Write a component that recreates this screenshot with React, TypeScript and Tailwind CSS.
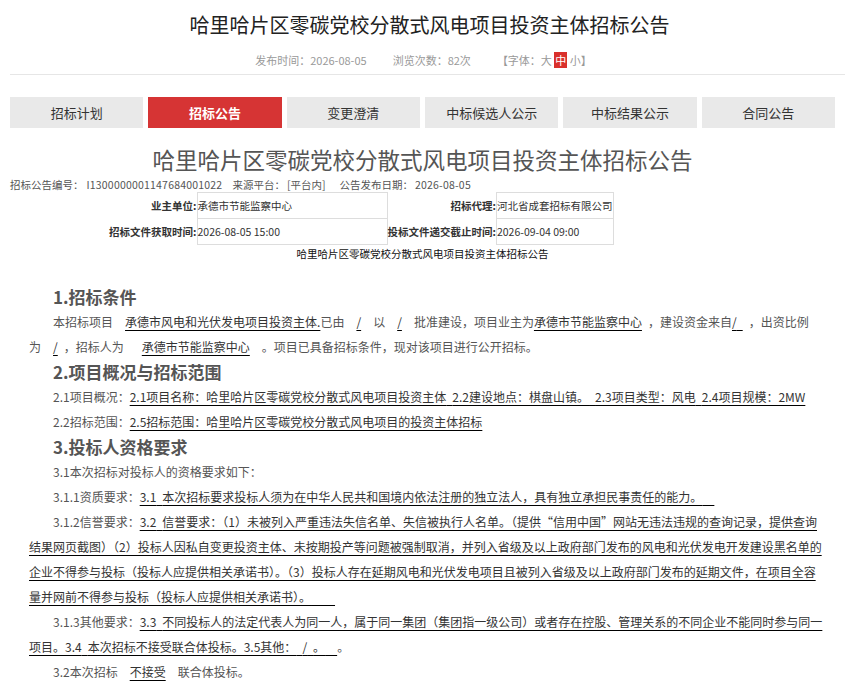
import type { ReactNode } from 'react';

const tabs = ['招标计划', '招标公告', '变更澄清', '中标候选人公示', '中标结果公示', '合同公告'];

// half-width blank, same advance as a 宋体 space
const sp = (n: number) => '\u2002'.repeat(n);

function U({ children }: { children: ReactNode }) {
  return (
    <span className="text-[#333] underline decoration-black decoration-1 underline-offset-[3px]">
      {children}
    </span>
  );
}

function Heading({ children }: { children: ReactNode }) {
  return <h3 className="pl-[24px] text-[17px] font-bold leading-[25px] text-[#555]">{children}</h3>;
}

function Line({ children }: { children: ReactNode }) {
  return <p className="indent-[24px] leading-[25px]">{children}</p>;
}

export default function App() {
  return (
    <div className="w-[859px] bg-white pb-[8px] font-['Noto_Sans_CJK_SC','Liberation_Sans',sans-serif] text-[#333]">
      <h1 className="pt-[11px] text-center text-[20px] leading-[28px] text-[#222]">
        哈里哈片区零碳党校分散式风电项目投资主体招标公告
      </h1>

      <div className="mt-[11px] flex justify-center gap-[26px] pr-[12px] text-[11px] leading-[20px] text-[#999]">
        <span>发布时间：2026-08-05</span>
        <span>浏览次数：82次</span>
        <span>
          【字体：大 <span className="bg-[#d9302c] px-px text-white">中</span> 小】
        </span>
      </div>

      <div className="ml-[10px] mr-[14px] mt-[4px] h-px bg-[#e6e6e6]" />

      <nav className="mx-[10px] mt-[22px] flex w-[825px] gap-[5px]">
        {tabs.map((t) => (
          <div
            key={t}
            className={`flex h-[31px] flex-1 items-center justify-center text-[13px] ${
              t === '招标公告' ? 'bg-[#d63434] font-bold text-white' : 'bg-[#e9e9e9] text-[#333]'
            }`}
          >
            {t}
          </div>
        ))}
      </nav>

      <div className="w-[845px]">
        <h2 className="mt-[16px] text-center text-[22.5px] leading-[30px] text-[#555]">
          哈里哈片区零碳党校分散式风电项目投资主体招标公告
        </h2>

        <div className="mt-[4px] flex pl-[10px] text-[10.5px] leading-[14px] text-[#555]">
          <span>招标公告编号：</span>
          <span className="ml-[3px] tracking-[0.2px]">I1300000001147684001022</span>
          <span className="ml-[10px]">来源平台：</span>
          <span className="ml-[2px]">[平台内]</span>
          <span className="ml-[14px]">公告发布日期：</span>
          <span className="ml-[2px] tracking-[0.2px]">2026-08-05</span>
        </div>

        <table className="ml-[60px] border-collapse whitespace-nowrap text-[10.5px] text-[#333]">
          <tbody>
            <tr className="h-[26px]">
              <td className="w-[137px] p-0 text-right font-bold">业主单位:</td>
              <td className="w-[190px] border border-[#ddd] p-0">承德市节能监察中心</td>
              <td className="w-[109px] p-0 text-right font-bold">招标代理:</td>
              <td className="w-[117px] border border-[#ddd] p-0">河北省成套招标有限公司</td>
            </tr>
            <tr className="h-[26px]">
              <td className="p-0 text-right font-bold">招标文件获取时间:</td>
              <td className="border border-[#ddd] p-0">2026-08-05 15:00</td>
              <td className="p-0 text-right font-bold">投标文件递交截止时间:</td>
              <td className="border border-[#ddd] p-0">2026-09-04 09:00</td>
            </tr>
          </tbody>
        </table>

        <p className="text-center text-[10.5px] leading-[18px] text-[#111]">
          哈里哈片区零碳党校分散式风电项目投资主体招标公告
        </p>
      </div>

      <div className="mt-[21px] w-[830px] pl-[29px] text-[12px] text-[#555]">
        <Heading>1.招标条件</Heading>
        <Line>
          本招标项目{sp(2)}
          <U>承德市风电和光伏发电项目投资主体.</U>
          已由{sp(2)}
          <U>/</U>
          {sp(2)}以{sp(2)}
          <U>/</U>
          {sp(2)}批准建设，项目业主为<U>承德市节能监察中心</U>
          {sp(1)}，建设资金来自<U>/{sp(1)}</U>
          {sp(1)}，出资比例
          <br />
          为{sp(2)}
          <U>/</U>
          {sp(1)}，招标人为{sp(3)}
          <U>承德市节能监察中心</U>
          {sp(2)}。项目已具备招标条件，现对该项目进行公开招标。
        </Line>

        <Heading>2.项目概况与招标范围</Heading>
        <Line>
          2.1项目概况：
          <U>
            2.1项目名称：哈里哈片区零碳党校分散式风电项目投资主体{sp(1)}2.2建设地点：棋盘山镇。{sp(1)}2.3项目类型：风电{sp(1)}2.4项目规模：2MW
          </U>
        </Line>
        <Line>
          2.2招标范围：<U>2.5招标范围：哈里哈片区零碳党校分散式风电项目的投资主体招标</U>
        </Line>

        <Heading>3.投标人资格要求</Heading>
        <Line>3.1本次招标对投标人的资格要求如下：</Line>
        <Line>
          3.1.1资质要求：
          <U>
            3.1{sp(1)}本次招标要求投标人须为在中华人民共和国境内依法注册的独立法人，具有独立承担民事责任的能力。{sp(2)}
          </U>
        </Line>
        <Line>
          3.1.2信誉要求：
          <U>
            3.2{sp(1)}信誉要求：（1）未被列入严重违法失信名单、失信被执行人名单。（提供“信用中国”网站无违法违规的查询记录，提供查询
            <br />
            结果网页截图）（2）投标人因私自变更投资主体、未按期投产等问题被强制取消，并列入省级及以上政府部门发布的风电和光伏发电开发建设黑名单的
            <br />
            企业不得参与投标（投标人应提供相关承诺书）。（3）投标人存在延期风电和光伏发电项目且被列入省级及以上政府部门发布的延期文件，在项目全容
            <br />
            量并网前不得参与投标（投标人应提供相关承诺书）。{sp(4)}
          </U>
        </Line>
        <Line>
          3.1.3其他要求：
          <U>
            3.3{sp(1)}不同投标人的法定代表人为同一人，属于同一集团（集团指一级公司）或者存在控股、管理关系的不同企业不能同时参与同一
            <br />
            项目。3.4{sp(1)}本次招标不接受联合体投标。3.5其他：{sp(1)}/{sp(1)}。{sp(2)}
          </U>
          。
        </Line>
        <Line>
          3.2本次招标{sp(2)}
          <U>不接受</U>
          {sp(2)}联合体投标。
        </Line>
      </div>
    </div>
  );
}
